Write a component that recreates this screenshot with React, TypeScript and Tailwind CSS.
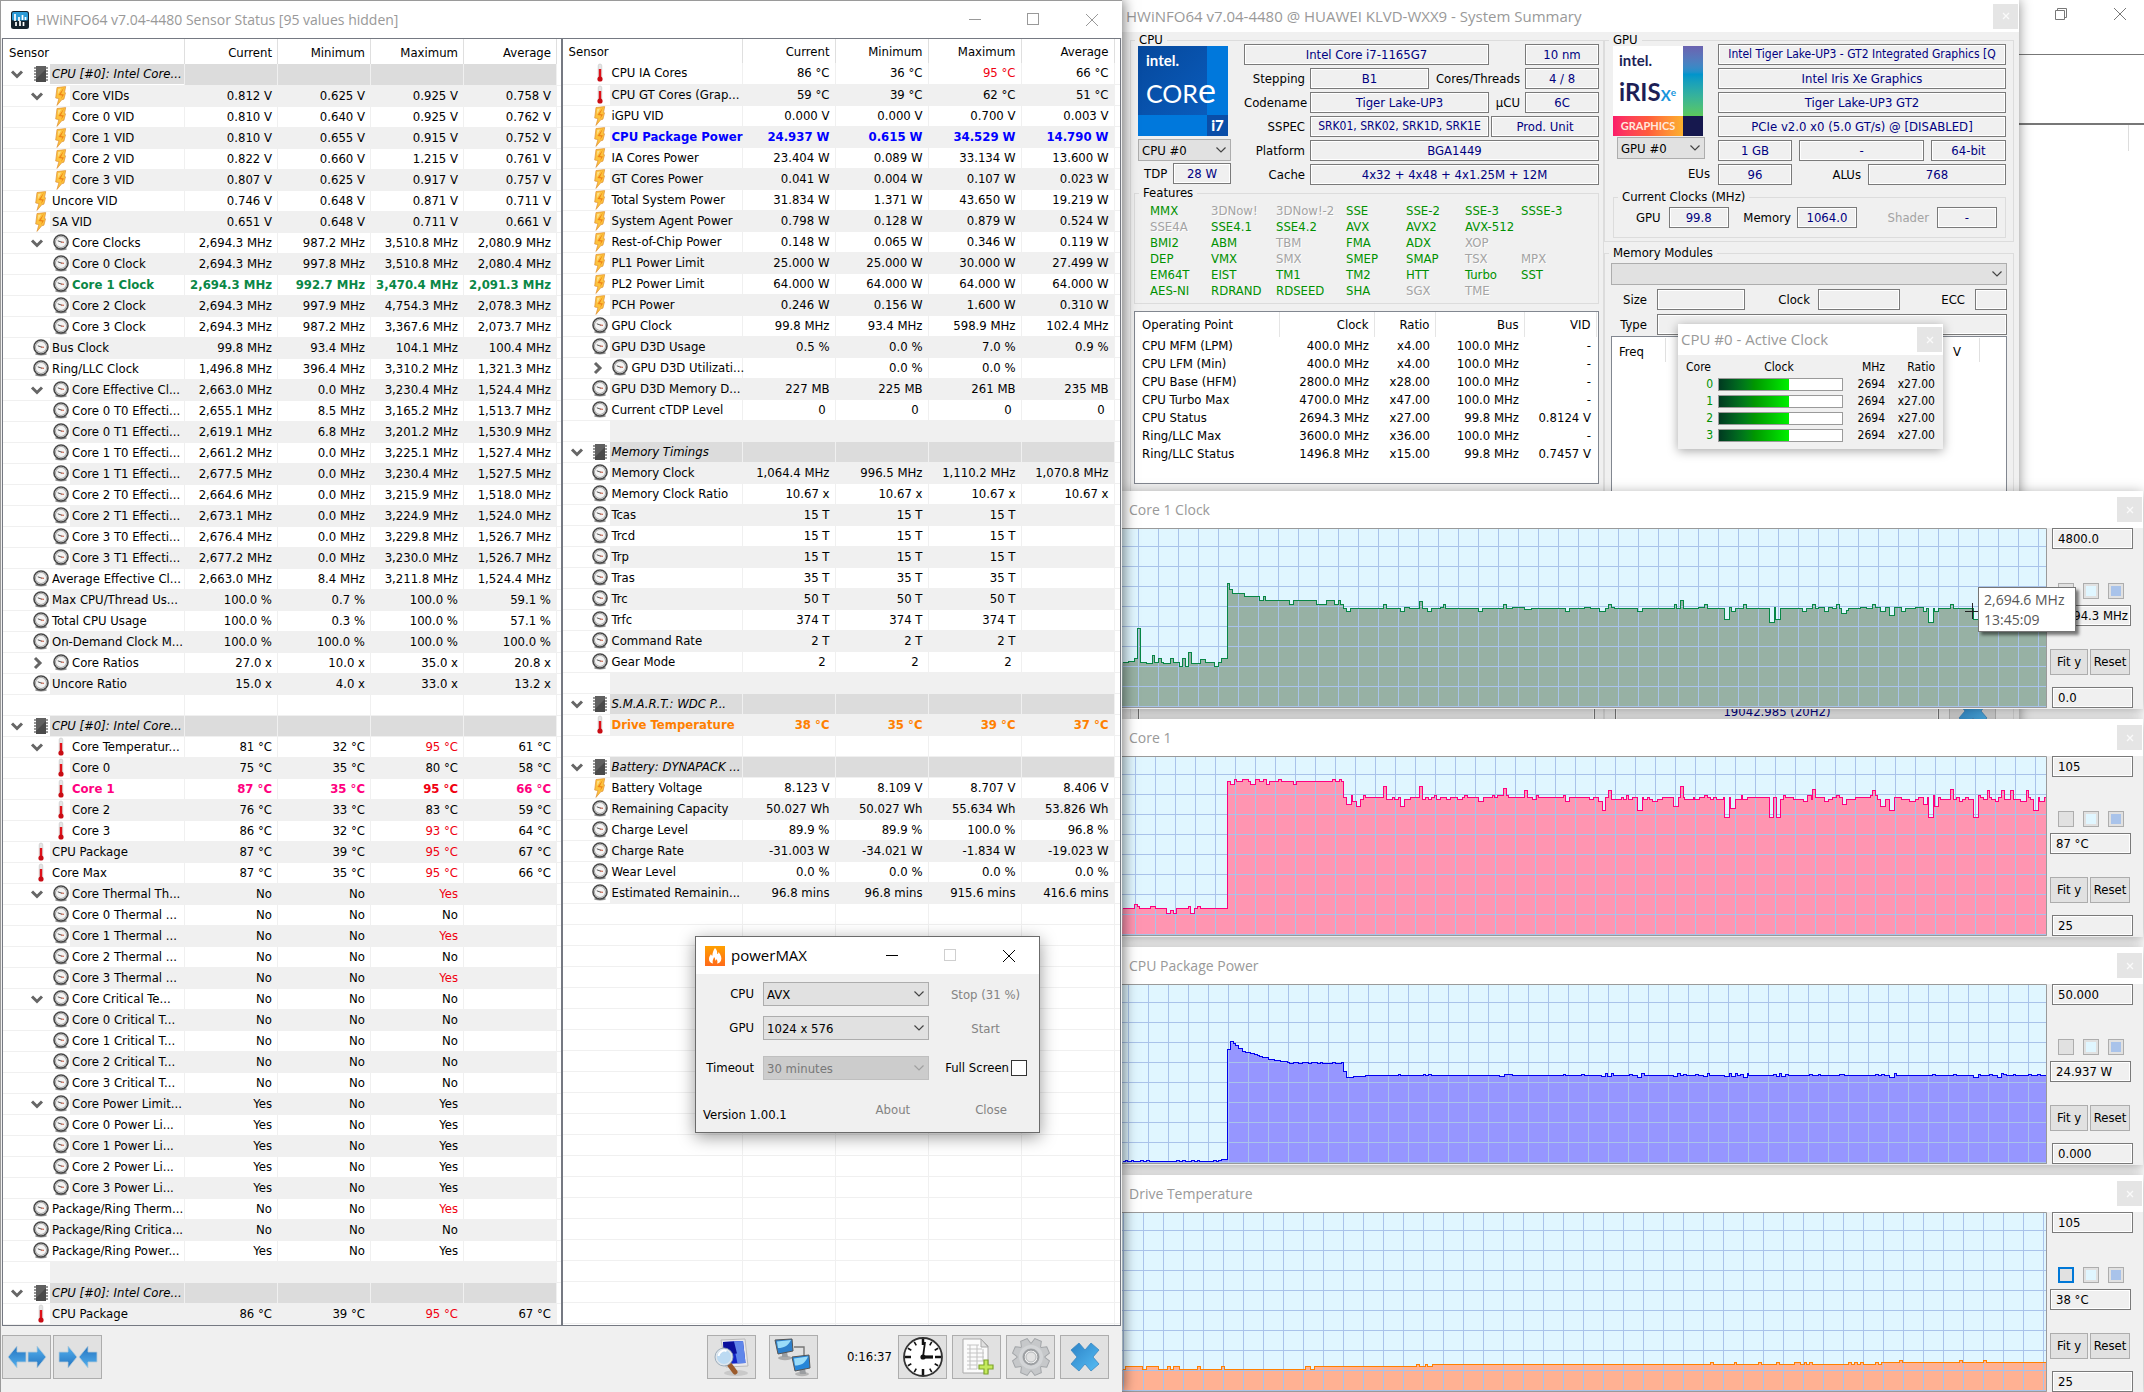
import React from "react";

type Kind = "chip" | "bolt" | "gauge" | "temp" | "none";
type Row = {
  name: string;
  kind: Kind;
  level?: 0 | 1;
  open?: boolean;
  closed?: boolean;
  values?: string[];
  tone?: "green" | "blue" | "pink" | "orange";
  hot?: boolean;
};

const group = (name: string): Row => ({ name, kind: "chip", open: true });
const blank: Row = { name: "", kind: "none" };
const empty: Row = { name: "", kind: "none" };

function item(kind: Kind, level: 0 | 1, name: string, values: string, extra: Partial<Row> = {}): Row {
  return { kind, level, name, values: values.split("|"), ...extra };
}

const leftRows: Row[] = [
  group("CPU [#0]: Intel Core..."),
  item("bolt", 1, "Core VIDs", "0.812 V|0.625 V|0.925 V|0.758 V", { open: true }),
  item("bolt", 1, "Core 0 VID", "0.810 V|0.640 V|0.925 V|0.762 V"),
  item("bolt", 1, "Core 1 VID", "0.810 V|0.655 V|0.915 V|0.752 V"),
  item("bolt", 1, "Core 2 VID", "0.822 V|0.660 V|1.215 V|0.761 V"),
  item("bolt", 1, "Core 3 VID", "0.807 V|0.625 V|0.917 V|0.757 V"),
  item("bolt", 0, "Uncore VID", "0.746 V|0.648 V|0.871 V|0.711 V"),
  item("bolt", 0, "SA VID", "0.651 V|0.648 V|0.711 V|0.661 V"),
  item("gauge", 1, "Core Clocks", "2,694.3 MHz|987.2 MHz|3,510.8 MHz|2,080.9 MHz", { open: true }),
  item("gauge", 1, "Core 0 Clock", "2,694.3 MHz|997.8 MHz|3,510.8 MHz|2,080.4 MHz"),
  item("gauge", 1, "Core 1 Clock", "2,694.3 MHz|992.7 MHz|3,470.4 MHz|2,091.3 MHz", { tone: "green" }),
  item("gauge", 1, "Core 2 Clock", "2,694.3 MHz|997.9 MHz|4,754.3 MHz|2,078.3 MHz"),
  item("gauge", 1, "Core 3 Clock", "2,694.3 MHz|987.2 MHz|3,367.6 MHz|2,073.7 MHz"),
  item("gauge", 0, "Bus Clock", "99.8 MHz|93.4 MHz|104.1 MHz|100.4 MHz"),
  item("gauge", 0, "Ring/LLC Clock", "1,496.8 MHz|396.4 MHz|3,310.2 MHz|1,321.3 MHz"),
  item("gauge", 1, "Core Effective Cl...", "2,663.0 MHz|0.0 MHz|3,230.4 MHz|1,524.4 MHz", { open: true }),
  item("gauge", 1, "Core 0 T0 Effecti...", "2,655.1 MHz|8.5 MHz|3,165.2 MHz|1,513.7 MHz"),
  item("gauge", 1, "Core 0 T1 Effecti...", "2,619.1 MHz|6.8 MHz|3,201.2 MHz|1,530.9 MHz"),
  item("gauge", 1, "Core 1 T0 Effecti...", "2,661.2 MHz|0.0 MHz|3,225.1 MHz|1,527.4 MHz"),
  item("gauge", 1, "Core 1 T1 Effecti...", "2,677.5 MHz|0.0 MHz|3,230.4 MHz|1,527.5 MHz"),
  item("gauge", 1, "Core 2 T0 Effecti...", "2,664.6 MHz|0.0 MHz|3,215.9 MHz|1,518.0 MHz"),
  item("gauge", 1, "Core 2 T1 Effecti...", "2,673.1 MHz|0.0 MHz|3,224.9 MHz|1,524.0 MHz"),
  item("gauge", 1, "Core 3 T0 Effecti...", "2,676.4 MHz|0.0 MHz|3,229.8 MHz|1,526.7 MHz"),
  item("gauge", 1, "Core 3 T1 Effecti...", "2,677.2 MHz|0.0 MHz|3,230.0 MHz|1,526.7 MHz"),
  item("gauge", 0, "Average Effective Cl...", "2,663.0 MHz|8.4 MHz|3,211.8 MHz|1,524.4 MHz"),
  item("gauge", 0, "Max CPU/Thread Us...", "100.0 %|0.7 %|100.0 %|59.1 %"),
  item("gauge", 0, "Total CPU Usage", "100.0 %|0.3 %|100.0 %|57.1 %"),
  item("gauge", 0, "On-Demand Clock M...", "100.0 %|100.0 %|100.0 %|100.0 %"),
  item("gauge", 1, "Core Ratios", "27.0 x|10.0 x|35.0 x|20.8 x", { closed: true }),
  item("gauge", 0, "Uncore Ratio", "15.0 x|4.0 x|33.0 x|13.2 x"),
  blank,
  group("CPU [#0]: Intel Core..."),
  item("temp", 1, "Core Temperatur...", "81 °C|32 °C|95 °C|61 °C", { open: true, hot: true }),
  item("temp", 1, "Core 0", "75 °C|35 °C|80 °C|58 °C"),
  item("temp", 1, "Core 1", "87 °C|35 °C|95 °C|66 °C", { tone: "pink", hot: true }),
  item("temp", 1, "Core 2", "76 °C|33 °C|83 °C|59 °C"),
  item("temp", 1, "Core 3", "86 °C|32 °C|93 °C|64 °C", { hot: true }),
  item("temp", 0, "CPU Package", "87 °C|39 °C|95 °C|67 °C", { hot: true }),
  item("temp", 0, "Core Max", "87 °C|35 °C|95 °C|66 °C", { hot: true }),
  item("gauge", 1, "Core Thermal Th...", "No|No|Yes|", { open: true, hot: true }),
  item("gauge", 1, "Core 0 Thermal ...", "No|No|No|"),
  item("gauge", 1, "Core 1 Thermal ...", "No|No|Yes|", { hot: true }),
  item("gauge", 1, "Core 2 Thermal ...", "No|No|No|"),
  item("gauge", 1, "Core 3 Thermal ...", "No|No|Yes|", { hot: true }),
  item("gauge", 1, "Core Critical Te...", "No|No|No|", { open: true }),
  item("gauge", 1, "Core 0 Critical T...", "No|No|No|"),
  item("gauge", 1, "Core 1 Critical T...", "No|No|No|"),
  item("gauge", 1, "Core 2 Critical T...", "No|No|No|"),
  item("gauge", 1, "Core 3 Critical T...", "No|No|No|"),
  item("gauge", 1, "Core Power Limit...", "Yes|No|Yes|", { open: true }),
  item("gauge", 1, "Core 0 Power Li...", "Yes|No|Yes|"),
  item("gauge", 1, "Core 1 Power Li...", "Yes|No|Yes|"),
  item("gauge", 1, "Core 2 Power Li...", "Yes|No|Yes|"),
  item("gauge", 1, "Core 3 Power Li...", "Yes|No|Yes|"),
  item("gauge", 0, "Package/Ring Therm...", "No|No|Yes|", { hot: true }),
  item("gauge", 0, "Package/Ring Critica...", "No|No|No|"),
  item("gauge", 0, "Package/Ring Power...", "Yes|No|Yes|"),
  blank,
  group("CPU [#0]: Intel Core..."),
  item("temp", 0, "CPU Package", "86 °C|39 °C|95 °C|67 °C", { hot: true }),
];

const rightRows: Row[] = [
  item("temp", 0, "CPU IA Cores", "86 °C|36 °C|95 °C|66 °C", { hot: true }),
  item("temp", 0, "CPU GT Cores (Grap...", "59 °C|39 °C|62 °C|51 °C"),
  item("bolt", 0, "iGPU VID", "0.000 V|0.000 V|0.700 V|0.003 V"),
  item("bolt", 0, "CPU Package Power", "24.937 W|0.615 W|34.529 W|14.790 W", { tone: "blue" }),
  item("bolt", 0, "IA Cores Power", "23.404 W|0.089 W|33.134 W|13.600 W"),
  item("bolt", 0, "GT Cores Power", "0.041 W|0.004 W|0.107 W|0.023 W"),
  item("bolt", 0, "Total System Power", "31.834 W|1.371 W|43.650 W|19.219 W"),
  item("bolt", 0, "System Agent Power", "0.798 W|0.128 W|0.879 W|0.524 W"),
  item("bolt", 0, "Rest-of-Chip Power", "0.148 W|0.065 W|0.346 W|0.119 W"),
  item("bolt", 0, "PL1 Power Limit", "25.000 W|25.000 W|30.000 W|27.499 W"),
  item("bolt", 0, "PL2 Power Limit", "64.000 W|64.000 W|64.000 W|64.000 W"),
  item("bolt", 0, "PCH Power", "0.246 W|0.156 W|1.600 W|0.310 W"),
  item("gauge", 0, "GPU Clock", "99.8 MHz|93.4 MHz|598.9 MHz|102.4 MHz"),
  item("gauge", 0, "GPU D3D Usage", "0.5 %|0.0 %|7.0 %|0.9 %"),
  item("gauge", 1, "GPU D3D Utilizati...", "|0.0 %|0.0 %|", { closed: true }),
  item("gauge", 0, "GPU D3D Memory D...", "227 MB|225 MB|261 MB|235 MB"),
  item("gauge", 0, "Current cTDP Level", "0\u00a0|0\u00a0|0\u00a0|0\u00a0"),
  blank,
  group("Memory Timings"),
  item("gauge", 0, "Memory Clock", "1,064.4 MHz|996.5 MHz|1,110.2 MHz|1,070.8 MHz"),
  item("gauge", 0, "Memory Clock Ratio", "10.67 x|10.67 x|10.67 x|10.67 x"),
  item("gauge", 0, "Tcas", "15 T|15 T|15 T|"),
  item("gauge", 0, "Trcd", "15 T|15 T|15 T|"),
  item("gauge", 0, "Trp", "15 T|15 T|15 T|"),
  item("gauge", 0, "Tras", "35 T|35 T|35 T|"),
  item("gauge", 0, "Trc", "50 T|50 T|50 T|"),
  item("gauge", 0, "Trfc", "374 T|374 T|374 T|"),
  item("gauge", 0, "Command Rate", "2 T|2 T|2 T|"),
  item("gauge", 0, "Gear Mode", "2\u00a0|2\u00a0|2\u00a0|"),
  blank,
  group("S.M.A.R.T.: WDC P..."),
  item("temp", 0, "Drive Temperature", "38 °C|35 °C|39 °C|37 °C", { tone: "orange" }),
  blank,
  group("Battery: DYNAPACK ..."),
  item("bolt", 0, "Battery Voltage", "8.123 V|8.109 V|8.707 V|8.406 V"),
  item("gauge", 0, "Remaining Capacity", "50.027 Wh|50.027 Wh|55.634 Wh|53.826 Wh"),
  item("gauge", 0, "Charge Level", "89.9 %|89.9 %|100.0 %|96.8 %"),
  item("gauge", 0, "Charge Rate", "-31.003 W|-34.021 W|-1.834 W|-19.023 W"),
  item("gauge", 0, "Wear Level", "0.0 %|0.0 %|0.0 %|0.0 %"),
  item("gauge", 0, "Estimated Remainin...", "96.8 mins|96.8 mins|915.6 mins|416.6 mins"),
  ...Array.from({ length: 21 }, () => empty),
];
const lastFilledRight = 39;

const ui = "font-['DejaVu_Sans_Condensed','DejaVu_Sans',sans-serif]";
const titleFont = "font-['Open_Sans','Noto_Sans',sans-serif]";

function SensorIcon({ kind }: { kind: Kind }) {
  if (kind === "chip")
    return (
      <svg className="h-[18px] w-4 shrink-0" viewBox="0 0 16 18">
        <path d="M1 3h14M1 6h14M1 9h14M1 12h14M1 15h14" stroke="#777" strokeWidth="1.4" />
        <rect x="3" y="1" width="10" height="16" fill="#4a4a4a" />
        <path d="M3 1h10v3L3 14z" fill="#606060" />
      </svg>
    );
  if (kind === "bolt")
    return (
      <svg className="h-5 w-4 shrink-0" viewBox="0 0 16 20">
        <path d="M4 1.500 12.700.6 11.500 6.600l1 .2-1.600 6.400-2.200.6L4 19.400 5.900 12.600 2.700 12z" fill="#fdc23c" stroke="#dd8f38" strokeWidth=".7" />
        <path d="M11 1.500 8 8l3 .5L8.100 13 9.100 9.500 5.500 9z" fill="#ee8519" />
        <path d="M5.100 3l3-.6L5.300 8z" fill="#fde08a" />
      </svg>
    );
  if (kind === "gauge")
    return (
      <svg className="h-[17px] w-4 shrink-0" viewBox="0 0 16 17">
        <ellipse cx="8" cy="15" rx="6" ry="1.500" fill="#444" opacity=".6" />
        <circle cx="8" cy="8" r="7" fill="#f1f1f1" stroke="#484848" strokeWidth="1.600" />
        <circle cx="8" cy="8" r="5.600" fill="#f4f4f4" stroke="#a9a9a9" strokeWidth="1.100" />
        <path d="M4.800 6.800 9 8.300" stroke="#555" strokeWidth="1" />
        <path d="M8 8l3 .4" stroke="#c96a55" strokeWidth="1.100" />
      </svg>
    );
  if (kind === "temp")
    return (
      <svg className="h-5 w-4 shrink-0" viewBox="0 0 16 20">
        <rect x="6.200" y="1" width="3.600" height="15" rx="1.800" fill="#e4e4e4" stroke="#c4c4c4" strokeWidth=".6" />
        <rect x="6.800" y="6" width="2.400" height="10" fill="#e01018" />
        <circle cx="8" cy="16" r="2.600" fill="#c80c14" />
      </svg>
    );
  return null;
}

function TreeChevron({ right }: { right?: boolean }) {
  return (
    <svg className="h-3.5 w-3.5" viewBox="0 0 14 14" fill="none" stroke="#666" strokeWidth="3">
      <path d={right ? "M5 2l5 5-5 5" : "M2 4.500l5 5 5-5"} />
    </svg>
  );
}

const toneClass = {
  green: "font-bold text-[#0a8746]",
  blue: "font-bold text-[#0000ff]",
  pink: "font-bold text-[#ff0080]",
  orange: "font-bold text-[#ff8000]",
};

function SensorTable({
  rows,
  label,
  headClass,
  tailClass,
  filled,
}: {
  rows: Row[];
  label: string;
  headClass: string;
  tailClass: string;
  filled: number;
}) {
  const heads = ["Current", "Minimum", "Maximum", "Average"];
  return (
    <section className="min-w-0 flex-1 overflow-hidden border border-[#757982] bg-white">
      <table aria-label={label} className="w-full table-fixed border-collapse text-[13px]">
        <colgroup>
          <col />
          <col className="w-[93px]" />
          <col className="w-[93px]" />
          <col className="w-[93px]" />
          <col className="w-[93px]" />
          <col className={tailClass} />
        </colgroup>
        <thead>
          <tr className={headClass}>
            <th className="border-r border-[#dfdfdf] p-0 pl-1.5 pt-0.5 text-left font-normal">Sensor</th>
            {heads.map((h) => (
              <th key={h} className="border-r border-[#dfdfdf] p-0 pr-[5px] pt-0.5 text-right font-normal">
                {h}
              </th>
            ))}
            <th className="p-0" />
          </tr>
        </thead>
        <tbody>
          {rows.map((row, i) => {
            const isGroup = row.kind === "chip";
            const shade = isGroup ? "bg-[#dcdcdc]" : i % 2 === 1 && i <= filled ? "bg-[#f0f0f0]" : "";
            const tone = row.tone ? toneClass[row.tone] : "";
            return (
              <tr key={i} className="h-[21px] leading-5">
                <td className="border-b border-r border-[#f0f0f0] p-0">
                  <div className="flex h-5 items-center">
                    {row.level === 1 && <span className="w-5 shrink-0" />}
                    <span className="flex w-7 shrink-0 justify-center">
                      {(row.open || row.closed) && <TreeChevron right={row.closed} />}
                    </span>
                    <span className="flex w-[19px] shrink-0 justify-center">
                      <SensorIcon kind={row.kind} />
                    </span>
                    <span className={`h-5 min-w-0 flex-1 whitespace-nowrap pl-0.5 ${shade} ${tone} ${isGroup ? "italic" : ""}`}>
                      {row.name}
                    </span>
                  </div>
                </td>
                {heads.map((h, c) => (
                  <td
                    key={h}
                    className={`whitespace-nowrap border-b border-r border-[#f0f0f0] p-0 pr-[5px] text-right ${shade} ${tone} ${row.hot && c === 2 ? "text-[#f00010]!" : ""}`}
                  >
                    {row.values?.[c] ?? ""}
                  </td>
                ))}
                <td className="border-b border-[#f0f0f0] p-0" />
              </tr>
            );
          })}
        </tbody>
      </table>
    </section>
  );
}

function WinControls({ color, square }: { color: string; square: string }) {
  return (
    <svg className="h-4 w-[132px]" viewBox="0 0 132 16" fill="none" strokeWidth="1" shapeRendering="crispEdges">
      <path d="M1 7.500h12" stroke={color} />
      <rect x="59.500" y="1.500" width="11" height="11" stroke={square} />
      <path d="M118 2l12 12M130 2l-12 12" stroke={color} shapeRendering="auto" />
    </svg>
  );
}

function ToolButton({ label, children }: { label: string; children: React.ReactNode }) {
  return (
    <button
      type="button"
      aria-label={label}
      className="flex h-11 w-[49px] shrink-0 items-center justify-center border border-[#adadad] bg-[#e1e1e1]"
    >
      {children}
    </button>
  );
}

const arrowRight = "M0 6h9V0l9 11-9 11v-6H0z";

function ArrowPair({ inward }: { inward?: boolean }) {
  return (
    <svg className="h-6 w-10" viewBox="0 0 40 24">
      <defs>
        <linearGradient id="arrowFill" x1="0" y1="0" x2="0" y2="1">
          <stop offset="0" stopColor="#55b1ee" />
          <stop offset="1" stopColor="#2373c0" />
        </linearGradient>
      </defs>
      <g fill="url(#arrowFill)" stroke="#b9cbd8" strokeWidth=".8">
        <path d={arrowRight} transform={inward ? "translate(1 1)" : "translate(19 23) rotate(180)"} />
        <path d={arrowRight} transform={inward ? "translate(39 23) rotate(180)" : "translate(21 1)"} />
      </g>
    </svg>
  );
}

function MonitorSearchIcon() {
  return (
    <svg className="h-10 w-10" viewBox="0 0 40 40">
      <ellipse cx="25" cy="36" rx="12" ry="3" fill="#c9c9c9" />
      <path d="M10 3l24-1 3 27-22 1z" fill="#e9e9ec" stroke="#bbb" />
      <path d="M12 5l20-1 2.500 22-20 1z" fill="#1325c8" />
      <path d="M22 4.500l10-.5 2.500 22-8 .4z" fill="#5f86ea" />
      <path d="M12 5l11-.5 3 12-13 1z" fill="#0a0f9c" />
      <path d="M18 27l6 8" stroke="#9b5b2c" strokeWidth="5" strokeLinecap="round" />
      <circle cx="13" cy="20" r="8" fill="#bcdaf2" stroke="#dfe6ec" strokeWidth="2" />
      <path d="M7.500 19a6 6 0 0 1 8-5" stroke="#fff" strokeWidth="2" fill="none" />
      <circle cx="13" cy="20" r="9" fill="none" stroke="#8da0b0" strokeWidth=".8" />
    </svg>
  );
}

function NetworkIcon() {
  return (
    <svg className="h-10 w-10" viewBox="0 0 40 40">
      <path d="M21 10h10v9" stroke="#777" fill="none" strokeWidth="1.400" />
      <ellipse cx="12" cy="21" rx="7" ry="2.200" fill="#aaa" />
      <ellipse cx="29" cy="37" rx="7" ry="2.200" fill="#b5b5b5" />
      <path d="M9 15h5l1 5H9zM26 31h6l1 6h-6z" fill="#9a9da0" />
      <path d="M2 3l17-1 1 12-15 3z" fill="#2d80cc" stroke="#555" />
      <path d="M4 4.500l14-1.500c-3 6-7 8-13 8z" fill="#9adcf9" />
      <path d="M19 20l17-2 1 13-15 3z" fill="#2686d8" stroke="#555" />
      <path d="M21 21.500l14-2c-3 7-7 9-13 9z" fill="#9adcf9" />
    </svg>
  );
}

function ClockIcon() {
  const ticks = Array.from({ length: 12 }, (_, i) => i * 30);
  return (
    <svg className="h-[42px] w-[42px]" viewBox="0 0 42 42">
      <circle cx="21" cy="21" r="19" fill="#fff" stroke="#333" strokeWidth="1.800" />
      {ticks.map((a) => (
        <path key={a} d={a % 90 === 0 ? "M21 3v6" : "M21 3.500v4"} transform={`rotate(${a} 21 21)`} stroke="#111" strokeWidth={a % 90 === 0 ? 2.5 : 1.6} />
      ))}
      <path d="M21 21l2-15" stroke="#111" strokeWidth="1.800" />
      <path d="M20 21h11" stroke="#111" strokeWidth="3.200" />
      <circle cx="21" cy="21" r="2.600" fill="#111" />
    </svg>
  );
}

function SheetAddIcon() {
  return (
    <svg className="h-10 w-10" viewBox="0 0 40 40">
      <path d="M6 2h18l7 7v27H6z" fill="#fbfbfb" stroke="#a9a9a9" />
      <path d="M24 2v8h7z" fill="#e0e0e0" stroke="#a9a9a9" />
      <path d="M10 8h12M10 12h15M10 16h17M10 20h17M10 24h17M10 28h10M10 32h10M13 8v24M20 8v24M26 12v12" stroke="#c6c6c6" strokeWidth="1.100" />
      <path d="M27 23h4v5h5v4h-5v5h-4v-5h-5v-4h5z" fill="#c4ea5c" stroke="#7ea32c" strokeWidth="1.200" />
    </svg>
  );
}

function GearIcon() {
  const teeth = Array.from({ length: 8 }, (_, i) => i * 45 + 22.5);
  return (
    <svg className="h-10 w-10" viewBox="0 0 40 40">
      <g fill="#c6c8ca" stroke="#a2a5a8" strokeWidth="1">
        {teeth.map((a) => (
          <path key={a} d="M14.500 9l2-7.500h7L25.500 9z" transform={`rotate(${a} 20 20)`} />
        ))}
        <circle cx="20" cy="20" r="13.500" stroke="none" />
      </g>
      <circle cx="20" cy="20" r="12" fill="#d3d5d7" />
      <circle cx="20" cy="20" r="8.500" fill="#a3a6a9" />
      <circle cx="20" cy="20" r="7" fill="#efefef" stroke="#8f9295" />
      <circle cx="20" cy="20" r="5" fill="#e2e2e2" stroke="#b5b8ba" />
    </svg>
  );
}

function CrossIcon() {
  return (
    <svg className="h-9 w-9" viewBox="0 0 36 36">
      <defs>
        <linearGradient id="crossFill" x1="0" y1="0" x2="1" y2="1">
          <stop offset="0" stopColor="#2d83c6" />
          <stop offset="1" stopColor="#55bdf5" />
        </linearGradient>
      </defs>
      <path d="M4 11l8-7 6 7 6-7 8 7-6 7 6 7-8 7-6-7-6 7-8-7 6-7z" fill="url(#crossFill)" stroke="#3c88c0" strokeWidth=".8" strokeLinejoin="round" />
    </svg>
  );
}

function SensorWindow() {
  return (
    <div className="relative z-20 flex h-full min-w-0 flex-col border-l border-t border-[#9a9a9a] bg-[#f0f0f0] shadow-[2px_0_12px_rgba(0,0,0,0.5)]">
      <header className="flex h-[37px] shrink-0 items-center bg-white pl-2.5 pr-[22px]">
        <svg className="h-[18px] w-[18px]" viewBox="0 0 18 18">
          <rect width="18" height="18" rx="2.500" fill="#14222c" />
          <rect x="1" y="1" width="16" height="8.500" rx="1.500" fill="#2a9ad6" />
          <path d="M4 3v7M8 6v4M11.500 4v5M14.500 6v3M5 11v4M9 10v5M12.500 11v4" stroke="#fff" strokeWidth="1.700" />
        </svg>
        <h1 className={`ml-[7px] text-[14px] text-[#999] ${titleFont}`}>HWiNFO64 v7.04-4480 Sensor Status [95 values hidden]</h1>
        <div className="ml-auto">
          <WinControls color="#999" square="#999" />
        </div>
      </header>
      <div className="flex min-h-0 flex-1 px-px">
        <SensorTable rows={leftRows} label="CPU sensors" headClass="h-[25px]" tailClass="w-1" filled={99} />
        <SensorTable rows={rightRows} label="System sensors" headClass="h-6" tailClass="w-1.5" filled={lastFilledRight} />
      </div>
      <footer className="flex h-[66px] shrink-0 items-start pl-px pr-[13px] pt-[9px]">
        <div className="flex gap-0.5">
          <ToolButton label="Expand columns"><ArrowPair /></ToolButton>
          <ToolButton label="Shrink columns"><ArrowPair inward /></ToolButton>
        </div>
        <div className="ml-auto flex items-center">
          <ToolButton label="System summary"><MonitorSearchIcon /></ToolButton>
          <span className="w-[13px]" />
          <ToolButton label="Network"><NetworkIcon /></ToolButton>
          <time className="ml-[29px] mr-1.5 text-[13px]">0:16:37</time>
          <div className="flex gap-[5px]">
            <ToolButton label="Reset clock"><ClockIcon /></ToolButton>
            <ToolButton label="Start logging"><SheetAddIcon /></ToolButton>
            <ToolButton label="Settings"><GearIcon /></ToolButton>
            <ToolButton label="Close sensors"><CrossIcon /></ToolButton>
          </div>
        </div>
      </footer>
    </div>
  );
}

function Combo({ label, options, className, disabled }: { label: string; options: string[]; className: string; disabled?: boolean }) {
  return (
    <div className={`relative ${className}`}>
      <select
        aria-label={label}
        disabled={disabled}
        className={`h-full w-full appearance-none border px-[3px] text-[13px] opacity-100 ${disabled ? "border-[#bfbfbf] bg-[#cccccc] text-[#787878]" : "border-[#adadad] bg-[#e1e1e1] text-black"}`}
      >
        {options.map((o) => (
          <option key={o}>{o}</option>
        ))}
      </select>
      <svg className="pointer-events-none absolute right-1 top-1/2 h-2.5 w-3 -translate-y-1/2" viewBox="0 0 12 10" fill="none" stroke={disabled ? "#a0a0a0" : "#444"} strokeWidth="1.200">
        <path d="M1.500 2.500L6 7l4.500-4.500" />
      </svg>
    </div>
  );
}

function PowerMax() {
  const flat = "text-[13px] text-[#838383]";
  return (
    <div className="absolute left-[695px] top-[936px] z-30 w-[345px] border border-[#6b6b6b] bg-[#f0f0f0] text-[13px] shadow-[0_4px_16px_rgba(0,0,0,0.4)]">
      <header className="flex h-[37px] items-center bg-white pl-[9px] pr-[22px]">
        <svg className="h-5 w-5" viewBox="0 0 20 20">
          <defs>
            <linearGradient id="flameBg" x1="0" y1="0" x2="0" y2="1">
              <stop offset="0" stopColor="#ffa000" />
              <stop offset="1" stopColor="#ff6a1a" />
            </linearGradient>
          </defs>
          <rect width="20" height="20" fill="url(#flameBg)" />
          <path d="M10 2c2 2 2.500 4 2 6 1 0 1.500-1 1.500-2 2.500 3 3.500 6 2.500 8.500-.7 2-2.500 3-4 3 .8-1.500.6-3-.6-4.500-.2 1-.6 1.400-1.200 1.600.2-1.500-.3-2.600-1.200-3.600C8.800 13 7 14 8 17.500c-2.500-.5-4-2-4-4.500 0-2 1-3.500 2-5 .3 1 .7 1.500 1.400 1.800C7.400 6.500 8.600 4 10 2z" fill="#fff" />
        </svg>
        <h2 className={`ml-1.5 text-[15px] text-black ${titleFont}`}>powerMAX</h2>
        <div className="ml-auto">
          <WinControls color="#000" square="#cfcfcf" />
        </div>
      </header>
      <div className="grid grid-cols-[58px_166px_1fr] items-center gap-x-[9px] px-0 pt-2 leading-6">
        <span className="text-right">CPU</span>
        <Combo label="CPU" options={["AVX"]} className="h-6" />
        <button type="button" className={`${flat} pr-1.5 pt-0.5 text-center leading-[22px]`}>Stop (31 %)</button>
        <span className="mt-2.5 text-right">GPU</span>
        <Combo label="GPU" options={["1024 x 576"]} className="mt-2.5 h-6" />
        <button type="button" className={`mt-2.5 pr-1.5 pt-0.5 text-center leading-[22px] ${flat}`}>Start</button>
        <span className="mt-4 text-right">Timeout</span>
        <Combo label="Timeout" options={["30 minutes"]} className="mt-4 h-6" disabled />
        <label className="mt-4 flex items-center justify-end gap-0.5 pr-3">
          Full Screen
          <input type="checkbox" className="h-4 w-4 appearance-none border border-[#333] bg-white" />
        </label>
      </div>
      <div className="flex h-[52px] items-center justify-between pl-[7px] pr-8 pt-2">
        <span className="pt-2.5">Version 1.00.1</span>
        <div className="flex gap-[65px]">
          <button type="button" className={flat}>About</button>
          <button type="button" className={flat}>Close</button>
        </div>
      </div>
    </div>
  );
}

function CloseBox() {
  return (
    <button type="button" aria-label="Close" className="flex h-[25px] w-[25px] shrink-0 items-center justify-center bg-[#e5e5e5]">
      <svg className="h-2 w-2" viewBox="0 0 8 8" stroke="#fafafa" strokeWidth="1.300">
        <path d="M1 1l6 6M7 1L1 7" />
      </svg>
    </button>
  );
}

function Field({ label, value, className = "" }: { label: string; value: string; className?: string }) {
  return (
    <input
      readOnly
      aria-label={label}
      value={value}
      className={`h-[21px] min-w-0 border border-[#7a7a7a] bg-[#f0f0f0] px-1 text-center text-[13px] text-[#000080] shadow-[inset_0_0_0_1px_#fff] outline-none ${className}`}
    />
  );
}

function Group({ title, className = "", children }: { title: string; className?: string; children: React.ReactNode }) {
  return (
    <fieldset className={`min-w-0 border border-[#dcdcdc] ${className}`}>
      <legend className="ml-1 h-2 px-1 leading-2">{title}</legend>
      {children}
    </fieldset>
  );
}

const features: [string, boolean][] = [
  ["MMX", true], ["3DNow!", false], ["3DNow!-2", false], ["SSE", true], ["SSE-2", true], ["SSE-3", true], ["SSSE-3", true],
  ["SSE4A", false], ["SSE4.1", true], ["SSE4.2", true], ["AVX", true], ["AVX2", true], ["AVX-512", true], ["", false],
  ["BMI2", true], ["ABM", true], ["TBM", false], ["FMA", true], ["ADX", true], ["XOP", false], ["", false],
  ["DEP", true], ["VMX", true], ["SMX", false], ["SMEP", true], ["SMAP", true], ["TSX", false], ["MPX", false],
  ["EM64T", true], ["EIST", true], ["TM1", true], ["TM2", true], ["HTT", true], ["Turbo", true], ["SST", true],
  ["AES-NI", true], ["RDRAND", true], ["RDSEED", true], ["SHA", true], ["SGX", false], ["TME", false], ["", false],
];

const points = [
  ["CPU MFM (LPM)", "400.0 MHz", "x4.00", "100.0 MHz", "-"],
  ["CPU LFM (Min)", "400.0 MHz", "x4.00", "100.0 MHz", "-"],
  ["CPU Base (HFM)", "2800.0 MHz", "x28.00", "100.0 MHz", "-"],
  ["CPU Turbo Max", "4700.0 MHz", "x47.00", "100.0 MHz", "-"],
  ["CPU Status", "2694.3 MHz", "x27.00", "99.8 MHz", "0.8124 V"],
  ["Ring/LLC Max", "3600.0 MHz", "x36.00", "100.0 MHz", "-"],
  ["Ring/LLC Status", "1496.8 MHz", "x15.00", "99.8 MHz", "0.7457 V"],
];

function CoreLogo() {
  return (
    <div className="grid h-[90px] w-[90px] grid-cols-[69px_21px] grid-rows-[69px_21px] bg-[#0078dc] font-['Lato',sans-serif] text-white">
      <div className="whitespace-nowrap bg-linear-to-br from-[#06489c] to-[#0a5cbc] pl-2 pt-1.5">
        <div className="text-[15px] font-bold leading-4">intel.</div>
        <div className="mt-2 text-[25px] leading-7">COR<span className="text-[34px]">e</span></div>
      </div>
      <div />
      <div />
      <div className="bg-[#0a4ea8] text-center text-[15px] font-black leading-[21px]">i7</div>
    </div>
  );
}

function IrisLogo() {
  return (
    <div className="grid h-[90px] w-[90px] grid-cols-[70px_20px] grid-rows-[70px_20px] bg-white font-['Lato',sans-serif]">
      <div className="whitespace-nowrap pl-1.5 pt-1.5 text-[#1d1f56]">
        <div className="text-[15px] font-bold leading-4">intel.</div>
        <div className="mt-2.5 text-[24px] font-bold leading-7">
          iRIS<span className="text-[15px] text-[#1795dc]">X</span>
          <sup className="text-[10px] text-[#1795dc]">e</sup>
        </div>
      </div>
      <div className="bg-linear-to-b from-[#6a62b0] via-[#0094cc] via-40% to-[#5cc95a]" />
      <div className="bg-linear-to-r from-[#fb1a68] via-[#ff5a3c] to-[#fbb02c] text-center text-[11px] font-bold leading-5 text-[#ffe9dc]">GRAPHICS</div>
      <div className="bg-[#16184e]" />
    </div>
  );
}

function CpuGroup() {
  const lab = "w-[61px] shrink-0 text-right";
  const row = "flex items-center gap-[5px]";
  return (
    <Group title="CPU" className="flex-1">
      <div className="flex h-[689px] flex-col pl-[3px] pr-1">
        <div className="flex gap-[13px] pl-1">
          <div className="w-[93px] shrink-0 pt-0.5">
            <CoreLogo />
            <Combo label="CPU selection" options={["CPU #0"]} className="mt-[3px] h-[22px]" />
            <div className="mt-0.5 flex items-center justify-between pl-1.5">
              <span>TDP</span>
              <Field label="TDP" value="28 W" className="w-[58px]" />
            </div>
          </div>
          <div className="flex min-w-0 flex-1 flex-col gap-[3px]">
            <div className="flex justify-between">
              <Field label="Processor name" value="Intel Core i7-1165G7" className="w-[245px]" />
              <Field label="Process" value="10 nm" className="w-[74px]" />
            </div>
            <div className={row}>
              <span className={lab}>Stepping</span>
              <Field label="Stepping" value="B1" className="w-[119px]" />
              <span className="flex-1 text-right">Cores/Threads</span>
              <Field label="Cores/Threads" value="4 / 8" className="w-[74px]" />
            </div>
            <div className={row}>
              <span className={lab}>Codename</span>
              <Field label="Codename" value="Tiger Lake-UP3" className="w-[179px]" />
              <span className="flex-1 text-right">μCU</span>
              <Field label="Microcode update" value="6C" className="w-[74px]" />
            </div>
            <div className={row}>
              <span className={lab}>SSPEC</span>
              <div className="flex min-w-0 flex-1 gap-0.5">
                <Field label="SSPEC" value="SRK01, SRK02, SRK1D, SRK1E" className="w-[179px] shrink-0 px-0! text-[12px]!" />
                <Field label="Unit type" value="Prod. Unit" className="w-0 flex-1" />
              </div>
            </div>
            <div className={row}>
              <span className={lab}>Platform</span>
              <Field label="Platform" value="BGA1449" className="flex-1" />
            </div>
            <div className={row}>
              <span className={lab}>Cache</span>
              <Field label="Cache" value="4x32 + 4x48 + 4x1.25M + 12M" className="flex-1" />
            </div>
          </div>
        </div>
        <Group title="Features" className="mt-1 h-[115px]">
          <ul className="grid grid-cols-[61px_65px_70px_60px_59px_56px_1fr] whitespace-nowrap pl-[15px] pt-1.5 leading-4">
            {features.map(([name, on], i) => (
              <li key={i} className={on ? "text-[#009000]" : "text-[#a3a3a3] [text-shadow:1px_1px_0_#fff]"}>
                {name}
              </li>
            ))}
          </ul>
        </Group>
        <div className="mt-[7px] h-[173px] overflow-hidden border border-[#828790] bg-white">
          <table aria-label="Operating points" className="w-full table-fixed border-collapse">
            <colgroup>
              <col />
              <col className="w-[95px]" />
              <col className="w-[61px]" />
              <col className="w-[89px]" />
              <col className="w-[72px]" />
              <col className="w-0.5" />
            </colgroup>
            <thead>
              <tr className="h-[25px]">
                <th className="border-r border-[#e5e5e5] pl-[7px] text-left font-normal">Operating Point</th>
                <th className="border-r border-[#e5e5e5] pr-[5px] text-right font-normal">Clock</th>
                <th className="border-r border-[#e5e5e5] pr-[5px] text-right font-normal">Ratio</th>
                <th className="border-r border-[#e5e5e5] pr-[5px] text-right font-normal">Bus</th>
                <th className="border-r border-[#e5e5e5] pr-[5px] text-right font-normal">VID</th>
                <th />
              </tr>
            </thead>
            <tbody>
              {points.map((p) => (
                <tr key={p[0]} className="h-[18px] leading-[18px]">
                  <td className="pl-[7px]">{p[0]}</td>
                  {p.slice(1).map((v, i) => (
                    <td key={i} className="whitespace-nowrap pr-[5px] text-right">{v}</td>
                  ))}
                  <td />
                </tr>
              ))}
            </tbody>
          </table>
        </div>
        <div className="mb-2 mt-auto px-1">
          <Field label="Motherboard" value="" className="w-full" />
        </div>
      </div>
    </Group>
  );
}

function GpuColumn() {
  return (
    <div className="w-[410px] shrink-0">
      <Group title="GPU" className="h-[206px]">
        <div className="flex gap-2 pl-2 pr-[7px]">
          <div className="w-[97px] shrink-0 pt-0.5">
            <IrisLogo />
            <Combo label="GPU selection" options={["GPU #0"]} className="ml-1 mt-px h-[22px] w-[88px]" />
            <div className="mt-[7px] text-right leading-4">EUs</div>
          </div>
          <div className="flex min-w-0 flex-1 flex-col gap-[3px]">
            <Field label="GPU name" value="Intel Tiger Lake-UP3 - GT2 Integrated Graphics [Q" className="w-full px-0! text-[12px]!" />
            <Field label="GPU brand" value="Intel Iris Xe Graphics" className="w-full" />
            <Field label="GPU codename" value="Tiger Lake-UP3 GT2" className="w-full" />
            <Field label="PCIe link" value="PCIe v2.0 x0 (5.0 GT/s) @ [DISABLED]" className="w-full" />
            <div className="flex gap-[7px]">
              <Field label="Memory size" value="1 GB" className="w-[74px]" />
              <Field label="Memory type" value="-" className="flex-1" />
              <Field label="Bus width" value="64-bit" className="w-[75px]" />
            </div>
            <div className="flex items-center gap-[7px]">
              <Field label="EUs" value="96" className="w-[74px]" />
              <span className="flex-1 text-right">ALUs</span>
              <Field label="ALUs" value="768" className="w-[138px]" />
            </div>
          </div>
        </div>
        <Group title="Current Clocks (MHz)" className="ml-2 mr-[7px] mt-2 h-[45px]">
          <div className="flex items-center justify-between pl-[22px] pr-2 pt-1.5">
            <label className="flex items-center gap-2">GPU <Field label="GPU clock" value="99.8" className="w-[60px]" /></label>
            <label className="mr-4 flex items-center gap-1.5">Memory <Field label="Memory clock" value="1064.0" className="w-[60px]" /></label>
            <label className="flex items-center gap-2 text-[#a3a3a3]">Shader <Field label="Shader clock" value="-" className="w-[60px]" /></label>
          </div>
        </Group>
      </Group>
      <Group title="Memory Modules" className="mt-[7px] h-[483px]">
        <div className="flex h-[472px] flex-col px-1.5">
          <Combo label="Memory module" options={[""]} className="mt-1.5 h-[22px]" />
          <div className="mt-1 flex items-center">
            <span className="w-9 shrink-0 text-right">Size</span>
            <Field label="Size" value="" className="ml-2.5 w-[88px]" />
            <span className="flex-1 text-right">Clock</span>
            <Field label="Clock" value="" className="ml-2 w-[82px]" />
            <span className="flex-1 text-right">ECC</span>
            <Field label="ECC" value="" className="ml-2.5 w-8" />
          </div>
          <div className="mt-1 flex items-center">
            <span className="w-9 shrink-0 text-right">Type</span>
            <Field label="Type" value="" className="ml-2.5 flex-1" />
          </div>
          <div className="mt-px h-[260px] border border-[#828790] bg-white">
            <div className="mt-px flex h-6 items-center">
              <span className="h-full w-[54px] border-r border-[#e0e0e0] pl-[7px] leading-7">Freq</span>
              <span className="h-full flex-1 border-r border-[#e0e0e0] pr-[18px] text-right leading-7">V</span>
              <span className="w-[26px]" />
            </div>
          </div>
          <div className="mt-auto flex items-center gap-2.5 pl-1">
            <Field label="OS build" value="19042.985 (20H2)" className="flex-1" />
            <button type="button" aria-label="Run" className="flex h-9 w-[47px] items-center justify-center border border-[#bbb] bg-[#dcdcdc]">
              <CrossIcon />
            </button>
            <span className="w-px" />
          </div>
        </div>
      </Group>
    </div>
  );
}

function ActiveClock() {
  return (
    <div className="absolute left-[556px] top-[324px] w-[265px] bg-[#f0f0f0] pb-[5px] text-[12px] shadow-[0_2px_10px_rgba(0,0,0,0.35)]">
      <header className="flex h-[31px] items-center justify-between bg-white pl-[3px] pr-px">
        <h2 className={`text-[15px] text-[#999] ${titleFont}`}>CPU #0 - Active Clock</h2>
        <CloseBox />
      </header>
      <table aria-label="Active clock" className="ml-2 mt-1 w-[250px] table-fixed border-collapse">
        <colgroup>
          <col className="w-[27px]" />
          <col />
          <col className="w-10" />
          <col className="w-[51px]" />
        </colgroup>
        <thead>
          <tr className="h-[17px] leading-[17px]">
            <th className="text-left font-normal">Core</th>
            <th className="text-center font-normal">Clock</th>
            <th className="text-right font-normal">MHz</th>
            <th className="pr-px text-right font-normal">Ratio</th>
          </tr>
        </thead>
        <tbody>
          {[0, 1, 2, 3].map((n) => (
            <tr key={n} className="h-[17px] leading-[17px]">
              <td className="text-right text-[#009000]">{n}</td>
              <td className="pl-[5px] pr-0.5">
                <div className="h-[13px] border border-[#9a9a9a] bg-white">
                  <div className="h-full w-[57%] bg-linear-to-r from-[#003a20] via-[#009600] via-50% to-[#00f000]" />
                </div>
              </td>
              <td className="text-right">2694</td>
              <td className="pr-px text-right">x27.00</td>
            </tr>
          ))}
        </tbody>
      </table>
    </div>
  );
}

function SystemSummary() {
  return (
    <div className="absolute left-0 top-0 h-[745px] w-[897px] bg-[#f0f0f0] text-[13px] leading-[21px] shadow-[0_0_12px_rgba(0,0,0,0.45)]">
      <header className="flex h-8 items-center justify-between bg-white pl-1 pr-px">
        <h1 className={`text-[15px] text-[#999] ${titleFont}`}>HWiNFO64 v7.04-4480 @ HUAWEI KLVD-WXX9 - System Summary</h1>
        <CloseBox />
      </header>
      <div className="flex pl-2 pr-[5px] pt-1">
        <CpuGroup />
        <GpuColumn />
      </div>
      <ActiveClock />
    </div>
  );
}

function BackgroundWindow() {
  return (
    <div className="absolute inset-0 bg-white" aria-hidden="true">
      <svg className="absolute right-[17px] top-[7px] h-3.5 w-[73px]" viewBox="0 0 73 14" fill="none" stroke="#777">
        <path d="M1.500 3.500h9v9h-9zM3.500 3.500v-2h9v9h-2" />
        <path d="M60 1l12 12M72 1L60 13" />
      </svg>
      <div className="mt-[54px] h-[71px] border-b-2 border-t border-[#777]" />
      <div className="ml-auto mr-[15px] h-[26px] w-px bg-[#ddd]" />
    </div>
  );
}

type Trace = {
  title: string;
  max: string;
  value: string;
  min: string;
  line: string;
  fill: string;
  gridX: number;
  focus?: boolean;
  data: string;
};

const traces: Trace[] = [
  {
    title: "Core 1 Clock", max: "4800.0", value: "2,694.3 MHz", min: "0.0", line: "#068746", fill: "#97b1a4", gridX: 16,
    data: "0,134 6,133 12,130 15,100 18,134 24,135 30,127 32,134 36,130 39,134 41,135 48,130 51,134 57,138 60,130 63,138 66,124 69,135 78,131 83,134 92,138 96,134 99,130 105,55 107,61 110,65 122,68 137,72 141,68 143,72 167,76 171,72 194,76 204,72 212,76 216,72 218,76 221,80 224,83 228,80 261,76 264,80 278,83 282,79 287,80 297,73 300,80 305,83 309,80 318,79 321,76 323,80 356,83 360,80 381,76 384,80 390,79 402,81 409,80 443,83 447,80 462,79 468,80 477,83 483,80 486,76 489,79 492,80 515,83 520,80 552,76 554,80 558,72 561,80 576,79 582,76 585,80 602,91 607,79 609,83 613,80 621,76 624,80 647,94 652,79 653,91 658,80 680,83 684,80 690,76 693,80 696,79 702,83 706,79 710,80 714,76 717,80 719,85 724,82 726,80 738,79 744,80 750,76 753,79 758,83 763,79 767,87 772,79 779,83 783,80 793,79 801,83 804,80 806,94 811,80 812,83 816,80 828,76 831,80 851,91 856,80",
  },
  {
    title: "Core 1", max: "105", value: "87 °C", min: "25", line: "#ff0080", fill: "#ff95b1", gridX: 13,
    data: "0,152 12,148 15,150 17,152 28,150 33,152 44,157 48,154 51,157 54,152 66,150 68,157 72,152 75,150 78,152 105,25 108,28 112,23 114,25 120,23 126,25 128,28 133,23 137,25 141,23 144,28 147,25 156,23 159,25 171,28 174,25 210,23 213,25 217,23 219,25 221,41 224,48 229,39 230,45 234,50 238,43 241,39 243,41 261,30 264,43 270,41 272,43 276,41 278,50 282,43 288,41 297,30 300,43 303,41 306,43 309,41 312,39 314,43 318,41 324,43 328,41 335,43 340,41 342,39 345,41 356,45 361,41 370,39 372,41 375,39 381,32 384,39 386,41 402,34 405,41 410,43 414,39 416,41 441,39 443,45 447,41 467,43 471,41 476,45 480,54 483,41 486,34 489,43 499,41 501,43 504,39 506,43 510,41 515,54 520,41 521,43 525,41 527,43 530,45 535,43 540,41 551,50 556,41 558,30 561,41 562,43 571,41 572,43 577,41 582,39 585,41 588,43 591,41 594,43 601,41 602,61 607,41 608,52 613,43 619,39 620,43 625,41 647,61 651,41 654,61 658,43 661,39 663,41 671,43 681,45 685,39 689,43 690,33 693,41 702,45 706,43 710,41 714,39 717,41 720,48 724,43 733,41 748,39 750,34 753,39 755,43 758,50 763,43 767,54 772,41 779,43 787,45 793,43 796,41 801,48 805,41 806,61 811,39 812,50 816,41 818,43 828,33 831,43 834,41 837,45 840,43 843,41 846,43 851,61 856,39 858,41 861,43 865,34 867,41 869,43 873,45 876,41 879,34 882,43 888,34 891,43 898,45 904,34 906,41 908,43 911,54 916,41 917,45 922,41",
  },
  {
    title: "CPU Package Power", max: "50.000", value: "24.937 W", min: "0.000", line: "#0000f0", fill: "#9696ff", gridX: 6,
    data: "0,177 3,176 5,177 9,176 11,177 18,176 21,177 24,176 27,177 54,176 57,177 60,176 63,177 69,176 72,177 75,176 77,177 91,176 94,177 96,176 99,175 105,65 108,57 111,59 113,61 116,64 120,67 123,68 128,69 132,70 135,71 137,72 140,73 146,75 152,76 158,77 165,78 167,79 171,78 176,79 180,78 186,79 189,78 195,79 198,78 200,79 210,78 213,79 219,78 221,87 224,93 231,92 243,91 276,90 278,91 301,90 303,91 306,90 309,91 377,92 382,90 390,91 441,90 443,91 459,90 462,91 479,92 483,89 485,92 489,89 491,91 507,90 510,91 515,93 519,89 522,91 551,92 555,89 558,91 561,90 564,91 573,90 576,91 581,92 585,89 587,91 602,92 607,89 609,92 613,89 615,91 618,90 621,93 625,89 626,91 651,90 654,92 657,89 659,92 663,90 666,91 687,90 690,91 696,90 698,91 717,90 722,91 753,90 756,91 759,90 762,91 767,93 772,89 774,91 810,90 813,91 831,90 834,91 851,93 856,90 858,91 867,90 870,91 875,93 879,89 881,90 884,91 891,90 893,91 906,90 909,91 915,90 918,91",
  },
  {
    title: "Drive Temperature", max: "105", value: "38 °C", min: "25", line: "#ff8000", fill: "#ffb193", gridX: 1, focus: true,
    data: "0,157 3,154 20,157 24,154 36,157 45,154 48,157 51,154 57,157 75,154 78,157 99,154 102,157 183,154 188,157 192,154 294,152 297,154 303,152 305,154 310,152 588,150 591,152 612,150 614,152 636,150 639,152 654,150 657,152 672,150 678,152 682,150 684,152 687,150 690,152 726,150 729,152 732,150 735,152 738,150 741,152 753,150 756,152 759,150 777,148 780,150 837,148 840,150 861,148 864,150",
  },
];

function stepPath(data: string) {
  return data
    .split(" ")
    .map((pair, i) => {
      const [x, y] = pair.split(",").map((n) => Number(n) + 0.5);
      return i === 0 ? `M${x} ${y}` : `H${x}V${y}`;
    })
    .join("")
    .concat("H925");
}

function Plot({ trace }: { trace: Trace }) {
  const path = stepPath(trace.data);
  const vertical = Array.from({ length: 47 }, (_, i) => trace.gridX + i * 20).filter((x) => x < 924);
  const horizontal = Array.from({ length: 9 }, (_, i) => 18 + i * 20);
  return (
    <svg className="block h-[180px] min-w-0 flex-1" viewBox="0 0 925 180" preserveAspectRatio="none" role="img" aria-label={`${trace.title} history`}>
      <rect width="925" height="180" fill="#e0f6ff" />
      <path d={`${path}V180H0Z`} fill={trace.fill} />
      <path
        d={vertical.map((x) => `M${x + 0.5} 0V180`).join("") + horizontal.map((y) => `M0 ${y + 0.5}H925`).join("")}
        stroke="#a9c3ea"
        shapeRendering="crispEdges"
      />
      <path d={path} fill="none" stroke={trace.line} strokeWidth="1" shapeRendering="crispEdges" />
      <path d="M0 .5H924.500V179.500H0" fill="none" stroke="#9a9a9a" />
    </svg>
  );
}

function SideField({ label, value, className = "" }: { label: string; value: string; className?: string }) {
  return (
    <input
      readOnly
      aria-label={label}
      value={value}
      className={`block h-[21px] w-[81px] border border-[#7a7a7a] bg-[#f0f0f0] px-[5px] text-[13px] text-black shadow-[inset_0_0_0_1px_#fff] outline-none ${className}`}
    />
  );
}

function ChartWindow({ trace }: { trace: Trace }) {
  const button = "h-[26px] border border-[#adadad] bg-[#e1e1e1] text-[13px]";
  const swatch = "h-4 w-4 border p-0.5";
  return (
    <section className="mr-px h-[218px] shrink-0 bg-[#f0f0f0] shadow-[0_2px_12px_rgba(0,0,0,0.35)]">
      <header className="flex h-[37px] items-center justify-between bg-white pl-[7px] pr-px">
        <h2 className={`text-[14px] text-[#999] ${titleFont}`}>{trace.title}</h2>
        <CloseBox />
      </header>
      <div className="flex">
        <Plot trace={trace} />
        <div className="flex w-24 shrink-0 flex-col pl-[3px]">
          <SideField label={`${trace.title} maximum`} value={trace.max} className="ml-0.5" />
          <div className="ml-2 mt-[34px] flex gap-[9px]">
            <button
              type="button"
              aria-label="Line colour"
              className={`${swatch} ${trace.focus ? "border-2 border-[#0078d7]" : "border-[#adadad]"} bg-[#e1e1e1]`}
            />
            <button type="button" aria-label="Background colour" className={`${swatch} border-[#adadad] bg-[#e1e1e1]`}>
              <span className="block h-full bg-[#e0f6ff]" />
            </button>
            <button type="button" aria-label="Grid colour" className={`${swatch} border-[#adadad] bg-[#e1e1e1]`}>
              <span className="block h-full bg-[#a9c3ea]" />
            </button>
          </div>
          <SideField label={`${trace.title} value`} value={trace.value} className={`mt-1.5 ${trace.title === "Core 1 Clock" ? "px-0.5! text-right" : ""}`} />
          <div className="mt-[23px] flex gap-0.5">
            <button type="button" className={`${button} w-[38px]`}>Fit y</button>
            <button type="button" className={`${button} w-10`}>Reset</button>
          </div>
          <SideField label={`${trace.title} minimum`} value={trace.min} className="ml-0.5 mt-3" />
        </div>
      </div>
    </section>
  );
}

function PlotTooltip() {
  return (
    <>
      <svg className="absolute left-[842px] top-[602px] h-5 w-5" viewBox="0 0 20 20" stroke="#222" shapeRendering="crispEdges">
        <path d="M8.500 1v16M1 9.500h15" />
      </svg>
      <div
        role="tooltip"
        className={`absolute left-[856px] top-[587px] h-[45px] w-[98px] whitespace-nowrap border border-[#767676] bg-white px-[5px] py-0.5 text-[14px] leading-5 text-[#575757] shadow-[3px_3px_3px_rgba(0,0,0,0.5)] ${titleFont}`}
      >
        2,694.6 MHz
        <br />
        13:45:09
      </div>
    </>
  );
}

export default function App() {
  return (
    <main className={`relative grid h-screen grid-cols-[1122fr_1022fr] grid-rows-[100%] overflow-hidden bg-[#f0f0f0] text-black ${ui}`}>
      <SensorWindow />
      <div className="relative min-w-0 overflow-hidden">
        <BackgroundWindow />
        <SystemSummary />
        <div className="relative flex flex-col gap-2.5 pt-[491px]">
          {traces.map((t) => (
            <ChartWindow key={t.title} trace={t} />
          ))}
        </div>
        <PlotTooltip />
      </div>
      <PowerMax />
    </main>
  );
}
